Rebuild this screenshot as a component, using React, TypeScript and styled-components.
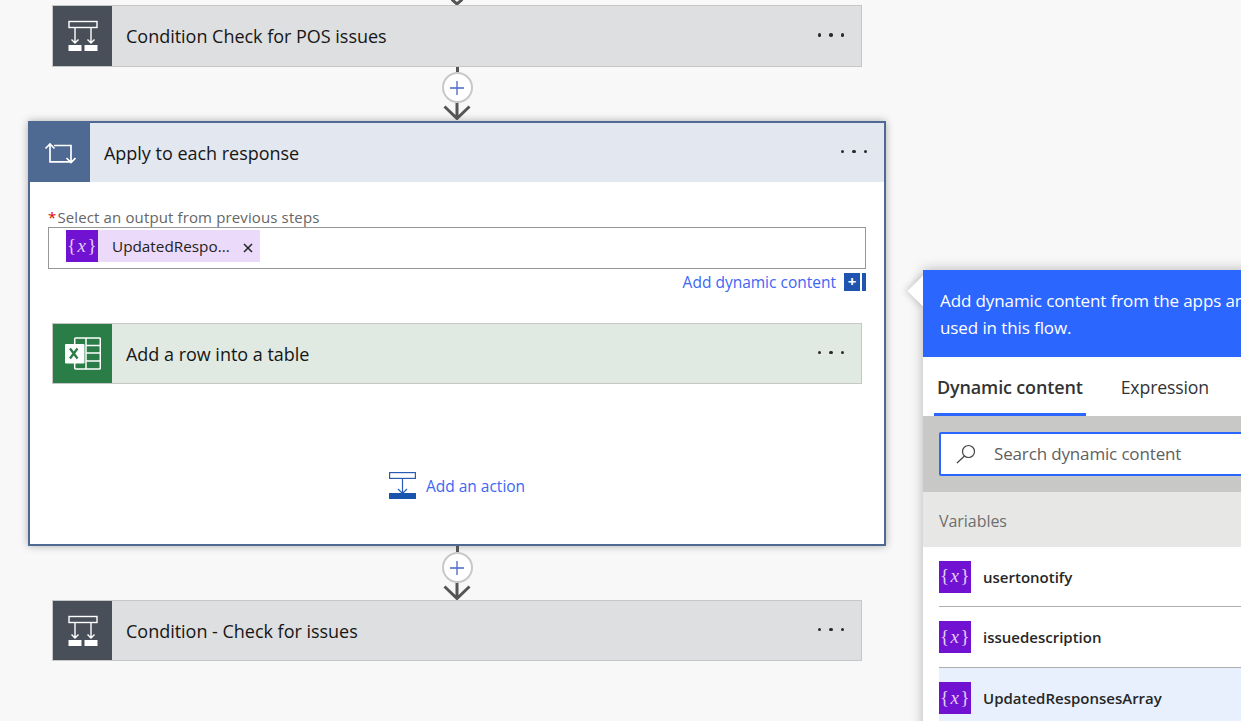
import React from "react";
import styled, { createGlobalStyle } from "styled-components";

const Global = createGlobalStyle`
  html, body { margin: 0; padding: 0; background: #f8f8f8; overflow: hidden; }
  * { box-sizing: border-box; }
  body { font-family: "Open Sans", "Noto Sans", "Liberation Sans", sans-serif; }
`;

const Page = styled.div`
  position: relative;
  width: 1241px;
  height: 721px;
  overflow: hidden;
  background: #f8f8f8;
`;
const Flow = styled.div`
  width: 914px;
  display: flex;
  flex-direction: column;
  align-items: center;
`;
const TipSvg = styled.svg`
  display: block;
  width: 12px;
  height: 5px;
`;
const Card = styled.div<{ $bg: string; $h?: number }>`
  width: 810px;
  height: ${(p) => p.$h ?? 61}px;
  flex: none;
  display: flex;
  align-items: stretch;
  background: ${(p) => p.$bg};
  border: 1px solid #c6c7c7;
`;
const CardIcon = styled.div<{ $bg: string }>`
  width: 59px;
  flex: none;
  display: flex;
  align-items: center;
  justify-content: center;
  background: ${(p) => p.$bg};
`;
const CardTitle = styled.div`
  flex: 1;
  display: flex;
  align-items: center;
  padding-left: 14px;
  font-size: 18px;
  letter-spacing: -0.02px;
  color: #161616;
`;
const Dots = styled.div`
  display: flex;
  align-items: center;
  gap: 8px;
  padding-right: 17px;
  margin-top: -2px;
`;
const Dot = styled.span`
  width: 3.5px;
  height: 3.5px;
  border-radius: 50%;
  background: #2a2a2a;
`;
const Connector = styled.div`
  height: 54px;
  flex: none;
  display: flex;
  flex-direction: column;
  align-items: center;
  position: relative;
  z-index: 2;
`;
const Stem = styled.div<{ $h: number }>`
  width: 3px;
  height: ${(p) => p.$h}px;
  flex: none;
  background: #555;
`;
const PlusButton = styled.div`
  width: 31px;
  height: 31px;
  flex: none;
  border-radius: 50%;
  border: 2px solid #c8c8c8;
  background: #fff;
  display: flex;
  align-items: center;
  justify-content: center;
`;
const ArrowSvg = styled.svg`
  display: block;
  flex: none;
  width: 28px;
  height: 17px;
`;
const Scope = styled.div`
  width: 858px;
  height: 425px;
  flex: none;
  background: #fff;
  border: 2px solid #4e6a92;
  box-shadow: 0 0 8px rgba(0, 0, 0, 0.3);
  display: flex;
  flex-direction: column;
`;
const ScopeHeader = styled.div`
  height: 59px;
  flex: none;
  display: flex;
  background: #e3e7ef;
`;
const ScopeIcon = styled.div`
  width: 60px;
  flex: none;
  display: flex;
  align-items: center;
  justify-content: center;
  background: #4e6a92;
`;
const ScopeBody = styled.div`
  flex: 1;
  display: flex;
  flex-direction: column;
  align-items: center;
  padding: 26px 18px 0;
`;
const FieldLabel = styled.div`
  align-self: stretch;
  height: 19px;
  font-size: 15px;
  line-height: 19px;
  color: #666;
  letter-spacing: 0.13px;
  white-space: nowrap;
  & > b {
    color: #d00;
    font-weight: 400;
    margin-right: 1px;
  }
`;
const Field = styled.div`
  align-self: stretch;
  height: 42px;
  border: 1px solid #979797;
  padding: 2px 0 0 17px;
`;
const Chip = styled.div`
  width: 194px;
  height: 32px;
  display: flex;
  align-items: center;
  background: #ebdaf9;
  font-size: 15.3px;
  color: #222;
`;
const VarIcon = styled.div`
  width: 32px;
  height: 32px;
  flex: none;
  display: flex;
  align-items: center;
  justify-content: center;
  background: #7112d3;
  color: #e2cef7;
  font-family: "Liberation Serif", serif;
  font-size: 19px;
  font-weight: 400;
  letter-spacing: 0.5px;
  padding-bottom: 1px;
  & > i {
    margin: 0 1px;
  }
`;
const ChipText = styled.span`
  margin-left: 14px;
  width: 125px;
  white-space: nowrap;
`;
const ChipClose = styled.svg`
  width: 10px;
  height: 10px;
  margin-left: 6px;
  margin-top: 3px;
`;
const DynamicRow = styled.div`
  align-self: stretch;
  display: flex;
  justify-content: flex-end;
  align-items: center;
  height: 18px;
  margin-top: 4px;
  margin-bottom: 32px;
  font-size: 15.5px;
  color: #3d66f6;
  white-space: nowrap;
`;
const DynamicButton = styled.div`
  width: 16px;
  height: 18px;
  margin-left: 8px;
  background: #1f55b0;
  color: #fff;
  font-size: 15px;
  line-height: 17px;
  font-weight: 700;
  text-align: center;
`;
const DynamicEdge = styled.div`
  width: 4px;
  height: 18px;
  margin-left: 2px;
  background: #1f55b0;
`;
const AddAction = styled.div`
  display: flex;
  align-items: center;
  gap: 10px;
  margin-top: 88px;
  font-size: 15.5px;
  color: #3d66f6;
`;
const Panel = styled.div`
  position: absolute;
  left: 923px;
  top: 270px;
  width: 440px;
  height: 500px;
  background: #fff;
  box-shadow: 0 0 12px rgba(0, 0, 0, 0.28);
  z-index: 3;
  &::before {
    content: "";
    position: absolute;
    left: -11px;
    top: 10px;
    width: 22px;
    height: 22px;
    background: #fff;
    transform: rotate(45deg);
    box-shadow: -2px 2px 6px rgba(0, 0, 0, 0.16);
  }
`;
const PanelHeader = styled.div`
  position: relative;
  height: 87px;
  background: #2b66fe;
  color: #fff;
  font-size: 17px;
  letter-spacing: -0.1px;
  line-height: 27px;
  padding: 17px 8px 0 17px;
`;
const Tabs = styled.div`
  position: relative;
  height: 59px;
  display: flex;
  padding-left: 11px;
  gap: 32px;
  background: #fff;
`;
const Tab = styled.div<{ $active?: boolean }>`
  height: 59px;
  padding: 3px 3px 0;
  display: flex;
  align-items: center;
  font-size: ${(p) => (p.$active ? 18 : 17.7)}px;
  letter-spacing: -0.15px;
  color: #333;
  font-weight: ${(p) => (p.$active ? 600 : 400)};
  border-bottom: 3px solid ${(p) => (p.$active ? "#2b66fe" : "transparent")};
`;
const SearchBand = styled.div`
  height: 76px;
  background: #c8c9c6;
  padding: 16px 0 0 16px;
`;
const SearchBox = styled.div`
  height: 44px;
  background: #fff;
  border: 2px solid #2b66fe;
  border-radius: 2px;
  display: flex;
  align-items: center;
  padding: 0 0 1px 14px;
  gap: 17px;
  font-size: 17px;
  letter-spacing: -0.15px;
  color: #5f5f5f;
`;
const GroupHeader = styled.div`
  height: 55px;
  background: #e7e8e6;
  padding: 2px 0 0 16px;
  display: flex;
  align-items: center;
  font-size: 16px;
  letter-spacing: -0.05px;
  color: #6e6e6e;
`;
const Row = styled.div<{ $selected?: boolean; $h: number }>`
  margin-left: 16px;
  height: ${(p) => p.$h}px;
  display: flex;
  align-items: center;
  gap: 12px;
  background: ${(p) => (p.$selected ? "#e8f0fd" : "#fff")};
  border-bottom: ${(p) => (p.$selected ? "none" : "1px solid #aeaeae")};
  font-size: 15px;
  font-weight: 600;
  color: #262626;
`;

const Ellipsis = () => (
  <Dots>
    <Dot />
    <Dot />
    <Dot />
  </Dots>
);

const ConditionIcon = () => (
  <svg width="32" height="32" viewBox="0 0 32 32" fill="none" stroke="#fff" strokeWidth="1.4">
    <rect x="2" y="1.5" width="28" height="6" />
    <path d="M8 8v15M4.5 19.5l3.5 3.5 3.5-3.5M24 8v15M20.5 19.5l3.5 3.5 3.5-3.5" />
    <rect x="1.5" y="25" width="13" height="6" fill="#fff" stroke="none" />
    <rect x="17.5" y="25" width="13" height="6" fill="#fff" stroke="none" />
  </svg>
);

const LoopIcon = () => (
  <svg width="32" height="22" viewBox="0 0 32 22" fill="none" stroke="#fff" strokeWidth="1.7">
    <path d="M6 2.5V19.8H27M1.5 6.5L6 2l4.5 4.5" />
    <path d="M10 3.5H27V20M22.5 16l4.5 4.5 4.5-4.5" />
  </svg>
);

const ExcelIcon = () => (
  <svg width="36" height="33" viewBox="0 0 36 33" fill="none">
    <rect x="9.7" y="1" width="25.6" height="31" rx="1" stroke="#fff" strokeWidth="1.5" />
    <path d="M21 1v31M21 8.5h14M21 16h14M21 24h14" stroke="#fff" strokeWidth="1.5" />
    <rect x="0" y="7" width="19.5" height="19.5" rx="1" fill="#fff" />
    <path d="M5 11.5l7.5 10M12.5 11.5L5 21.5" stroke="#2a7d46" strokeWidth="2.3" />
  </svg>
);

const ActionIcon = () => (
  <svg width="27" height="27" viewBox="0 0 27 27" fill="none" stroke="#2a5cb4" strokeWidth="1.2">
    <rect x="0.6" y="0.6" width="25.8" height="5.8" />
    <path d="M13.5 6.5v14.5M9 17l4.5 4.5L18 17" />
    <rect x="0" y="21" width="27" height="6" fill="#1a55ad" stroke="none" />
  </svg>
);

const Plus = () => (
  <svg width="16" height="16" viewBox="0 0 16 16" fill="none" stroke="#4a66c8" strokeWidth="1.3">
    <path d="M8 1v14M1 8h14" />
  </svg>
);

const Link = ({ stem }: { stem: number }) => (
  <Connector>
    <Stem $h={stem} />
    <PlusButton>
      <Plus />
    </PlusButton>
    <ArrowSvg viewBox="0 0 28 17" fill="none" stroke="#555" strokeWidth="3">
      <path d="M14 0v15.5M1.5 3.5L14 15.5 26.5 3.5" />
    </ArrowSvg>
  </Connector>
);

const Var = () => (
  <VarIcon>
    {"{"}
    <i>x</i>
    {"}"}
  </VarIcon>
);

export default function App() {
  return (
    <Page>
      <Global />
      <Flow>
        <TipSvg viewBox="0 0 12 5" fill="none" stroke="#555" strokeWidth="3">
          <path d="M-1 -2L6 4 13 -2" />
        </TipSvg>
        <Card $bg="#dedfe0" $h={62}>
          <CardIcon $bg="#484f58">
            <ConditionIcon />
          </CardIcon>
          <CardTitle>Condition Check for POS issues</CardTitle>
          <Ellipsis />
        </Card>
        <Link stem={5} />
        <Scope>
          <ScopeHeader>
            <ScopeIcon>
              <LoopIcon />
            </ScopeIcon>
            <CardTitle>Apply to each response</CardTitle>
            <Ellipsis />
          </ScopeHeader>
          <ScopeBody>
            <FieldLabel>
              <b>*</b>Select an output from previous steps
            </FieldLabel>
            <Field>
              <Chip>
                <Var />
                <ChipText>UpdatedRespo...</ChipText>
                <ChipClose viewBox="0 0 10 10" fill="none" stroke="#222" strokeWidth="1.5">
                  <path d="M1 1l8 8M9 1L1 9" />
                </ChipClose>
              </Chip>
            </Field>
            <DynamicRow>
              Add dynamic content
              <DynamicButton>+</DynamicButton>
              <DynamicEdge />
            </DynamicRow>
            <Card $bg="#e0e9e2">
              <CardIcon $bg="#2a7d46">
                <ExcelIcon />
              </CardIcon>
              <CardTitle>Add a row into a table</CardTitle>
              <Ellipsis />
            </Card>
            <AddAction>
              <ActionIcon />
              Add an action
            </AddAction>
          </ScopeBody>
        </Scope>
        <Link stem={6} />
        <Card $bg="#dedfe0">
          <CardIcon $bg="#484f58">
            <ConditionIcon />
          </CardIcon>
          <CardTitle>Condition - Check for issues</CardTitle>
          <Ellipsis />
        </Card>
      </Flow>
      <Panel>
        <PanelHeader>Add dynamic content from the apps and connectors used in this flow.</PanelHeader>
        <Tabs>
          <Tab $active>Dynamic content</Tab>
          <Tab>Expression</Tab>
        </Tabs>
        <SearchBand>
          <SearchBox>
            <svg width="22" height="20" viewBox="0 0 22 20" fill="none" stroke="#444" strokeWidth="1.2">
              <circle cx="13.5" cy="7.5" r="6" />
              <path d="M9.5 12L2 19" />
            </svg>
            Search dynamic content
          </SearchBox>
        </SearchBand>
        <GroupHeader>Variables</GroupHeader>
        <Row $h={60}>
          <Var />
          usertonotify
        </Row>
        <Row $h={61}>
          <Var />
          issuedescription
        </Row>
        <Row $h={60} $selected>
          <Var />
          UpdatedResponsesArray
        </Row>
      </Panel>
    </Page>
  );
}
